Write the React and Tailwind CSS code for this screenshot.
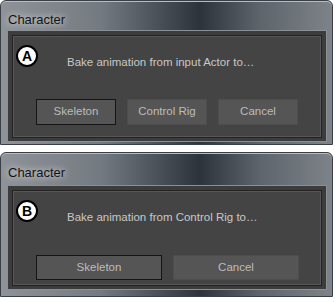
import React from 'react';

const font = { fontFamily: '"Liberation Sans", Arial, sans-serif' };

function Badge({ letter }) {
  return (
    <div className="absolute left-[3px] top-[9px] w-[22px] h-[22px] rounded-full bg-white border-[2.5px] border-black flex items-center justify-center">
      <span className="text-[14px] font-bold leading-none text-black">{letter}</span>
    </div>
  );
}

function DialogButton({ label, focused, wide }) {
  return (
    <button
      className={`${wide ? 'w-[126px] h-[25px]' : 'w-[80px] h-[26px]'} ${
        focused ? 'border-[#151515]' : 'border-[#4d4d4d]'
      } border bg-[#555555] text-[11.5px] text-[#bcbcbc]`}
    >
      {label}
    </button>
  );
}

function CharacterDialog({ letter, message, buttons, wide, titleH, titleTop, textTop, btnGap, bottomPad, bottomFrame }) {
  return (
    <div
      className="w-[333px] rounded-t-[6px] border border-[#3a3f45] bg-[linear-gradient(90deg,#8e9399_0%,#747a81_30%,#2c333b_60%,#5e646b_78%,#7d8389_100%)] shadow-[inset_0_1px_0_#b8bcc0]"
    >
      <div className={`${titleH} ${titleTop} pl-[7px]`}>
        <span className="text-[13px] leading-[16px] text-[#141414] [text-shadow:0_0_6px_rgba(255,255,255,0.7),0_0_12px_rgba(255,255,255,0.5)]">
          Character
        </span>
      </div>
      <div className={`ml-[6px] mr-[5px] ${bottomFrame} border border-[#8c9094] bg-[#3c3c3c] px-[4px] pt-[4px] pb-[3px]`}>
        <div className="relative border border-[#232323] bg-[#444444] shadow-[inset_0_0_0_1px_#575757]">
          <Badge letter={letter} />
          <div className={`${textTop} pl-[54px] text-[11.5px] leading-[16px] text-[#c8c8c8]`}>{message}</div>
          <div className={`${btnGap} ${bottomPad} pl-[23px] flex gap-[11px]`}>
            {buttons.map((b, i) => (
              <DialogButton key={b} label={b} focused={i === 0} wide={wide} />
            ))}
          </div>
        </div>
      </div>
    </div>
  );
}

export default function App() {
  return (
    <div className="w-[335px] h-[302px] bg-white overflow-hidden" style={font}>
      <CharacterDialog
        letter="A"
        message="Bake animation from input Actor to…"
        buttons={['Skeleton', 'Control Rig', 'Cancel']}
        titleH="h-[29px]"
        titleTop="pt-[6px]"
        textTop="mt-[18px]"
        btnGap="mt-[29px]"
        bottomPad="pb-[12px]"
        bottomFrame="mb-[2px]"
      />
      <div className="h-[7px]" />
      <CharacterDialog
        letter="B"
        message="Bake animation from Control Rig to…"
        buttons={['Skeleton', 'Cancel']}
        wide
        titleH="h-[32px]"
        titleTop="pt-[7px]"
        textTop="mt-[18px]"
        btnGap="mt-[30px]"
        bottomPad="pb-[5px]"
        bottomFrame="mb-[6px]"
      />
    </div>
  );
}
